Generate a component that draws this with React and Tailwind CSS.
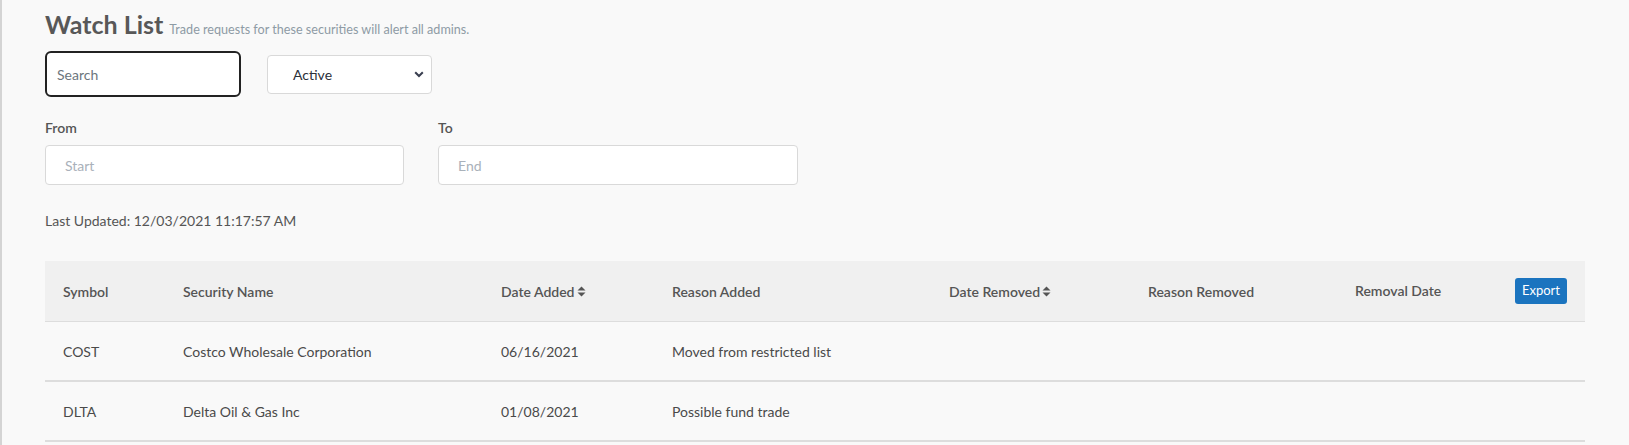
import React from "react";

const font = { fontFamily: "Lato, 'Open Sans', 'Liberation Sans', sans-serif" };

function SortIcon() {
  return (
    <svg width="9" height="11" viewBox="0 0 9 11" className="ml-[2px] inline-block">
      <path d="M0.5 4.5 L4.5 0.5 L8.5 4.5 Z" fill="#555" />
      <path d="M0.5 6.5 L4.5 10.5 L8.5 6.5 Z" fill="#555" />
    </svg>
  );
}

const cols = "grid grid-cols-[120px_318px_171px_277px_199px_207px_160px_1fr]";

export default function App() {
  const rows = [
    ["COST", "Costco Wholesale Corporation", "06/16/2021", "Moved from restricted list"],
    ["DLTA", "Delta Oil & Gas Inc", "01/08/2021", "Possible fund trade"],
  ];
  return (
    <div
      style={font}
      className="min-h-screen w-full bg-[#f9f9f9] border-l-2 border-[#d4d4d4] pl-[43px] pr-[44px] pt-[8px]"
    >
      <div className="flex items-baseline">
        <h1 className="text-[25px] leading-[32px] font-bold text-[#585858]">Watch List</h1>
        <span className="ml-[6px] text-[12.6px] text-[#8e9ba5]">
          Trade requests for these securities will alert all admins.
        </span>
      </div>

      <div className="mt-[11px] flex items-center gap-[26px]">
        <input
          placeholder="Search"
          className="w-[196px] h-[46px] rounded-[6px] border-2 border-[#222] bg-white px-[10px] text-[14px] text-[#444] placeholder:text-[#6c757d] outline-none"
        />
        <div className="w-[165px] h-[39px] rounded-[4px] border border-[#d9d9d9] bg-white flex items-center justify-between pl-[25px] pr-[7px]">
          <span className="text-[14px] text-[#2b2f3a]">Active</span>
          <svg width="10" height="7" viewBox="0 0 10 7">
            <path d="M1.2 1.2 L5 5 L8.8 1.2" stroke="#3a3f50" strokeWidth="2" fill="none" />
          </svg>
        </div>
      </div>

      <div className="mt-[21px] flex gap-[34px]">
        <div className="flex flex-col">
          <label className="text-[14px] leading-[20px] font-semibold text-[#555]">From</label>
          <input
            placeholder="Start"
            className="mt-[7px] w-[359px] h-[40px] rounded-[4px] border border-[#d9d9d9] bg-white px-[19px] text-[14px] placeholder:text-[#a9b1ba] outline-none"
          />
        </div>
        <div className="flex flex-col">
          <label className="text-[14px] leading-[20px] font-semibold text-[#555]">To</label>
          <input
            placeholder="End"
            className="mt-[7px] w-[360px] h-[40px] rounded-[4px] border border-[#d9d9d9] bg-white px-[19px] text-[14px] placeholder:text-[#a9b1ba] outline-none"
          />
        </div>
      </div>

      <div className="mt-[26px] text-[14px] leading-[20px] text-[#555]">
        Last Updated: 12/03/2021 11:17:57 AM
      </div>

      <div className="mt-[30px] w-full">
        <div className={`${cols} h-[61px] items-center bg-[#f0f0f0] border-b border-[#dddddd] text-[14px] font-semibold text-[#555]`}>
          <div className="pl-[18px]">Symbol</div>
          <div className="pl-[18px]">Security Name</div>
          <div className="pl-[18px] flex items-center">Date Added<SortIcon /></div>
          <div className="pl-[18px]">Reason Added</div>
          <div className="pl-[18px] flex items-center">Date Removed<SortIcon /></div>
          <div className="pl-[18px]">Reason Removed</div>
          <div className="pl-[18px] -mt-[2px]">Removal Date</div>
          <div className="pl-[18px]">
            <button className="h-[26px] w-[52px] rounded-[3px] bg-[#1b74bf] text-white text-[13px] font-normal">
              Export
            </button>
          </div>
        </div>
        {rows.map((r) => (
          <div key={r[0]} className={`${cols} h-[60px] items-center border-b-2 border-[#dddddd] text-[14px] text-[#4a4a4a]`}>
            <div className="pl-[18px]">{r[0]}</div>
            <div className="pl-[18px]">{r[1]}</div>
            <div className="pl-[18px]">{r[2]}</div>
            <div className="pl-[18px]">{r[3]}</div>
            <div />
            <div />
            <div />
            <div />
          </div>
        ))}
      </div>
    </div>
  );
}
